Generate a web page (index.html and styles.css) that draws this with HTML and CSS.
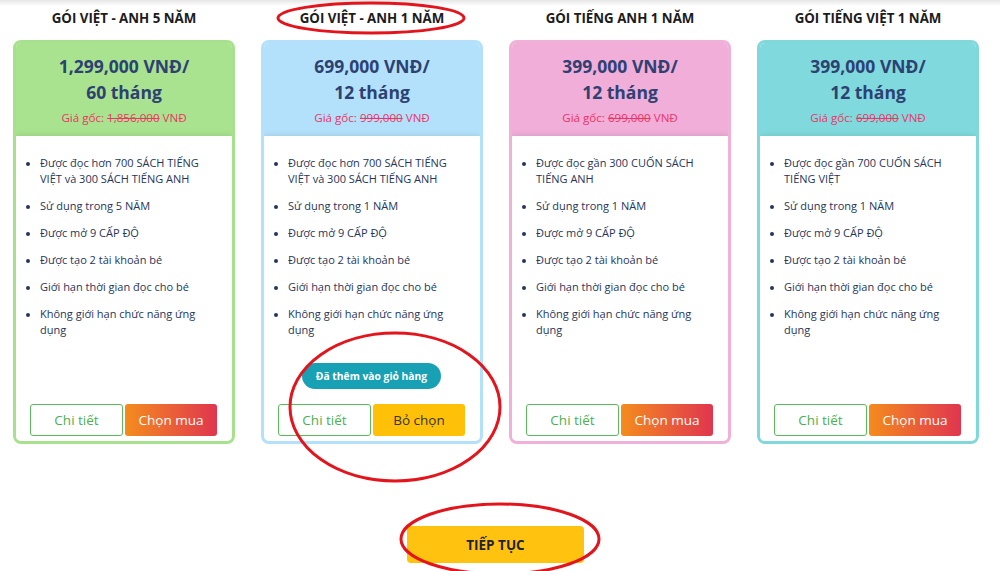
FILE: index.html
```html
<!DOCTYPE html>
<html lang="vi">
<head>
<meta charset="utf-8">
<title>Gói</title>
<link rel="stylesheet" href="styles.css">
</head>
<body>
<div class="page">
  <div class="plans">
    <div class="plan">
      <div class="plan-title">GÓI VIỆT - ANH 5 NĂM</div>
      <div class="card card-green">
        <div class="card-head">
          <div class="price">1,299,000 VNĐ/<br>60 tháng</div>
          <div class="orig">Giá gốc: <s>1,856,000</s> VNĐ</div>
        </div>
        <div class="card-body">
          <ul class="features">
            <li>Được đọc hơn 700 SÁCH TIẾNG VIỆT và 300 SÁCH TIẾNG ANH</li>
            <li>Sử dụng trong 5 NĂM</li>
            <li>Được mở 9 CẤP ĐỘ</li>
            <li>Được tạo 2 tài khoản bé</li>
            <li>Giới hạn thời gian đọc cho bé</li>
            <li>Không giới hạn chức năng ứng dụng</li>
          </ul>
          <div class="actions">
            <button class="btn btn-detail">Chi tiết</button>
            <button class="btn btn-buy">Chọn mua</button>
          </div>
        </div>
      </div>
    </div>
    <div class="plan">
      <div class="plan-title">GÓI VIỆT - ANH 1 NĂM</div>
      <div class="card card-blue">
        <div class="card-head">
          <div class="price">699,000 VNĐ/<br>12 tháng</div>
          <div class="orig">Giá gốc: <s>999,000</s> VNĐ</div>
        </div>
        <div class="card-body">
          <ul class="features">
            <li>Được đọc hơn 700 SÁCH TIẾNG VIỆT và 300 SÁCH TIẾNG ANH</li>
            <li>Sử dụng trong 1 NĂM</li>
            <li>Được mở 9 CẤP ĐỘ</li>
            <li>Được tạo 2 tài khoản bé</li>
            <li>Giới hạn thời gian đọc cho bé</li>
            <li>Không giới hạn chức năng ứng dụng</li>
          </ul>
          <div class="added"><span class="added-pill">Đã thêm vào giỏ hàng</span></div>
          <div class="actions">
            <button class="btn btn-detail">Chi tiết</button>
            <button class="btn btn-unselect">Bỏ chọn</button>
          </div>
        </div>
      </div>
    </div>
    <div class="plan">
      <div class="plan-title">GÓI TIẾNG ANH 1 NĂM</div>
      <div class="card card-pink">
        <div class="card-head">
          <div class="price">399,000 VNĐ/<br>12 tháng</div>
          <div class="orig">Giá gốc: <s>699,000</s> VNĐ</div>
        </div>
        <div class="card-body">
          <ul class="features">
            <li>Được đọc gần 300 CUỐN SÁCH TIẾNG ANH</li>
            <li>Sử dụng trong 1 NĂM</li>
            <li>Được mở 9 CẤP ĐỘ</li>
            <li>Được tạo 2 tài khoản bé</li>
            <li>Giới hạn thời gian đọc cho bé</li>
            <li>Không giới hạn chức năng ứng dụng</li>
          </ul>
          <div class="actions">
            <button class="btn btn-detail">Chi tiết</button>
            <button class="btn btn-buy">Chọn mua</button>
          </div>
        </div>
      </div>
    </div>
    <div class="plan">
      <div class="plan-title">GÓI TIẾNG VIỆT 1 NĂM</div>
      <div class="card card-teal">
        <div class="card-head">
          <div class="price">399,000 VNĐ/<br>12 tháng</div>
          <div class="orig">Giá gốc: <s>699,000</s> VNĐ</div>
        </div>
        <div class="card-body">
          <ul class="features">
            <li>Được đọc gần 700 CUỐN SÁCH TIẾNG VIỆT</li>
            <li>Sử dụng trong 1 NĂM</li>
            <li>Được mở 9 CẤP ĐỘ</li>
            <li>Được tạo 2 tài khoản bé</li>
            <li>Giới hạn thời gian đọc cho bé</li>
            <li>Không giới hạn chức năng ứng dụng</li>
          </ul>
          <div class="actions">
            <button class="btn btn-detail">Chi tiết</button>
            <button class="btn btn-buy">Chọn mua</button>
          </div>
        </div>
      </div>
    </div>
  </div>
  <div class="continue-row">
    <button class="btn-continue">TIẾP TỤC</button>
  </div>
</div>
<svg class="marks" width="1000" height="571" viewBox="0 0 1000 571" aria-hidden="true">
  <ellipse cx="371" cy="18" rx="93" ry="15" />
  <ellipse cx="395" cy="407" rx="105" ry="74" />
  <ellipse cx="500" cy="539" rx="99" ry="35" />
</svg>
</body>
</html>
```
FILE: styles.css
```css
* { box-sizing: border-box; }
html, body { margin: 0; padding: 0; }
body {
  width: 1000px;
  height: 571px;
  overflow: hidden;
  position: relative;
  font-family: "Open Sans", "Noto Sans", "DejaVu Sans", sans-serif;
  background: #fff linear-gradient(to bottom, #e6e6e6 0, #ffffff 6px) no-repeat;
  color: #2b3a5a;
}
.page { padding-left: 13px; }
.plans {
  display: grid;
  grid-template-columns: repeat(4, 222px);
  column-gap: 26px;
}
.plan { display: flex; flex-direction: column; }
.plan-title {
  height: 40px;
  line-height: 36px;
  text-align: center;
  font-weight: 700;
  font-size: 13.3px;
  color: #1c1c1c;
}
.card {
  height: 404px;
  border: 3px solid;
  border-radius: 8px;
  display: flex;
  flex-direction: column;
  overflow: hidden;
  background: #fff;
}
.card-green { border-color: #a7e18e; }
.card-green .card-head { background: #a9e38f; }
.card-blue { border-color: #b3e0fb; }
.card-blue .card-head { background: #b3e1fc; }
.card-pink { border-color: #f0b0d8; }
.card-pink .card-head { background: #f0aed9; }
.card-teal { border-color: #80d8db; }
.card-teal .card-head { background: #80dadd; }
.card-head {
  height: 93px;
  padding-top: 10px;
  text-align: center;
}
.price {
  font-size: 17.5px;
  font-weight: 700;
  line-height: 26px;
  color: #2d4172;
}
.orig {
  margin-top: 4px;
  font-size: 11.6px;
  line-height: 18px;
  color: #ec3466;
}
.orig s { text-decoration-thickness: 1px; }
.card-body {
  flex: 1;
  display: flex;
  flex-direction: column;
  padding: 19px 12px 5px 11px;
  background: #fff;
  box-shadow: 0 -1px 6px rgba(0,0,0,0.10);
  position: relative;
}
.features {
  margin: 0;
  padding: 0 0 0 13px;
  font-size: 11px;
  line-height: 16px;
  color: #26365a;
}
.features li { margin-bottom: 11px; padding-right: 5px; }
.features li::marker { font-size: 10px; }
.added {
  margin-top: auto;
  display: flex;
  justify-content: center;
  margin-bottom: 15px;
}
.added-pill {
  display: inline-block;
  height: 26px;
  line-height: 26px;
  padding: 0 14px;
  border-radius: 13px;
  background: #18a0b4;
  color: #fff;
  font-size: 10.3px;
  font-weight: 700;
}
.added + .actions { margin-top: 0; }
.actions {
  margin-top: auto;
  display: flex;
  gap: 2px;
  padding-left: 3px;
}
.btn {
  height: 32px;
  width: 93px;
  border-radius: 3px;
  font-family: inherit;
  font-size: 13.5px;
  padding: 0;
  cursor: pointer;
}
.btn-detail {
  border: 1px solid #5cb85c;
  background: #fff;
  color: #4caf50;
}
.btn-buy {
  border: none;
  width: 92px;
  color: #fff;
  background: linear-gradient(to right, #f48c1d, #e0354f);
}
.btn-unselect {
  border: none;
  width: 92px;
  color: #333;
  background: #ffc107;
}
.continue-row {
  display: flex;
  justify-content: center;
  width: 965px;
  padding-top: 82px;
}
.btn-continue {
  width: 177px;
  height: 37px;
  border: none;
  border-radius: 4px;
  background: #ffc20e;
  color: #1e2233;
  font-family: inherit;
  font-weight: 700;
  font-size: 13.5px;
}
.marks {
  position: absolute;
  left: 0;
  top: 0;
  pointer-events: none;
}
.marks ellipse {
  fill: none;
  stroke: #e3141c;
  stroke-width: 3;
}
```
